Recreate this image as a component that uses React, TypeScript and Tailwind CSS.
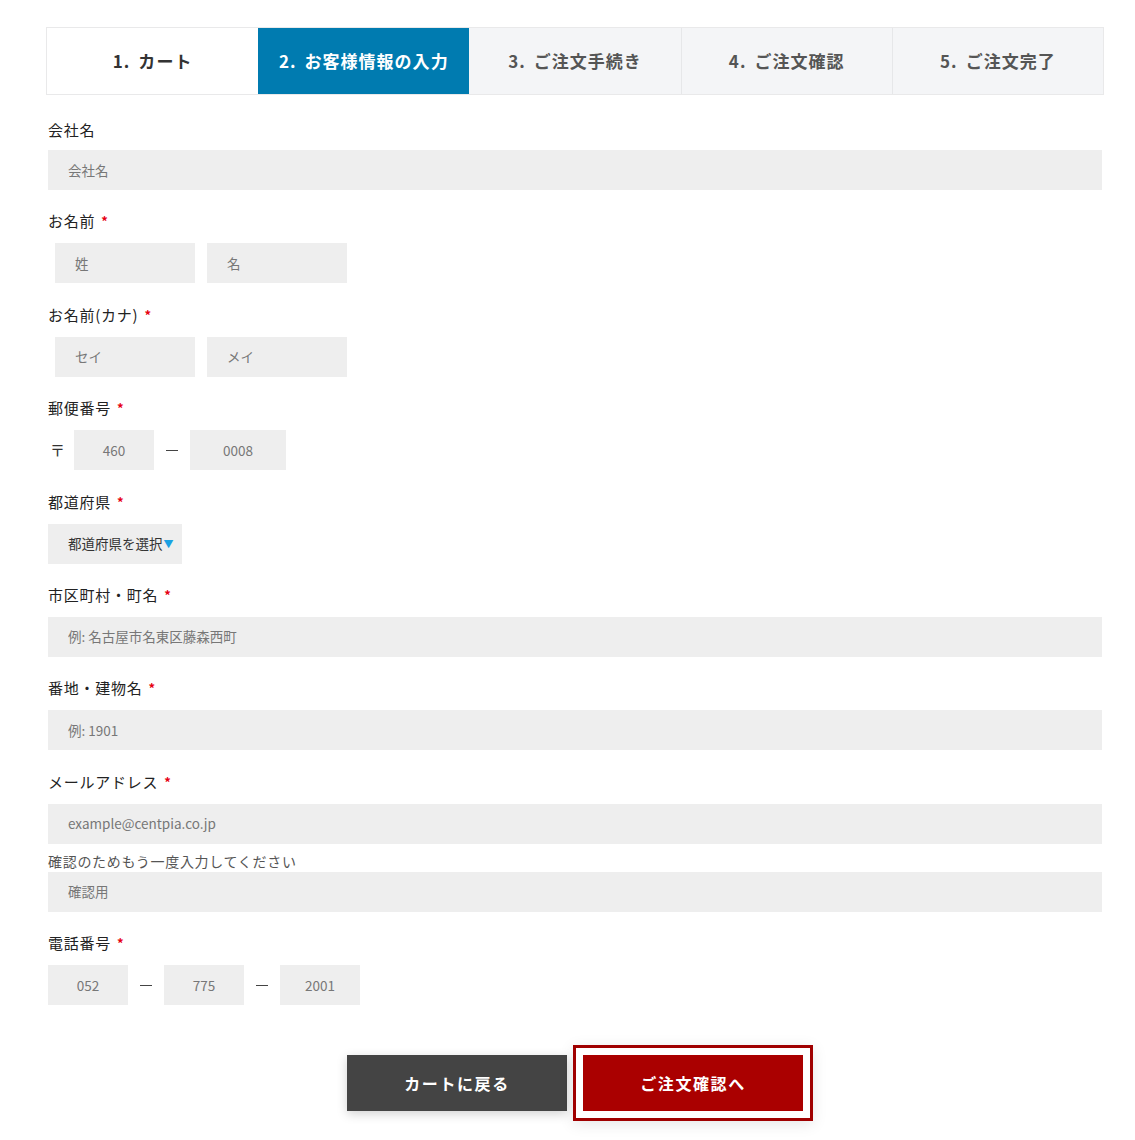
import React from "react";

const steps = [
  { no: "1.", label: "カート" },
  { no: "2.", label: "お客様情報の入力" },
  { no: "3.", label: "ご注文手続き" },
  { no: "4.", label: "ご注文確認" },
  { no: "5.", label: "ご注文完了" },
];

function Label({ children, required, first }: { children: React.ReactNode; required?: boolean; first?: boolean }) {
  return (
    <div
      className={`flex items-center text-[15px] leading-[22px] tracking-[0.05em] text-[#222] ${
        first ? "mb-[9px]" : "mb-[11px]"
      }`}
    >
      <span>{children}</span>
      {required && <span className="ml-[6px] text-[13px] font-bold text-[#e60012]">*</span>}
    </div>
  );
}

function Field({ placeholder, className = "", center }: { placeholder: string; className?: string; center?: boolean }) {
  return (
    <input
      type="text"
      placeholder={placeholder}
      className={`h-[40px] bg-[#eeeeee] pb-[1px] text-[13.5px] text-[#333] placeholder:text-[#777] outline-none ${
        center ? "text-center" : "px-[20px]"
      } ${className}`}
    />
  );
}

function Dash() {
  return (
    <span className="flex w-[36px] shrink-0 items-center justify-center">
      <span className="block h-px w-[12px] bg-[#444]" />
    </span>
  );
}

export default function App() {
  return (
    <div className="min-h-[1140px] bg-white font-['Noto_Sans_CJK_JP','Noto_Sans',sans-serif]">
      <div className="ml-[46px] w-[1058px] pt-[27px]">
        {/* ステップ表示 */}
        <div className="grid grid-cols-5 border border-[#e9e9ea]">
          {steps.map((s, i) => {
            const active = i === 1;
            const done = i === 0;
            return (
              <div
                key={s.no}
                className={`flex h-[66px] items-center justify-center text-[17px] font-bold tracking-[0.06em] ${
                  active
                    ? "bg-[#007bb0] text-white"
                    : done
                    ? "bg-white text-[#333]"
                    : "bg-[#f4f5f7] text-[#555]"
                } ${i > 2 ? "border-l border-[#e6e7e9]" : ""}`}
              >
                <span className="mr-[8px]">{s.no}</span>
                <span>{s.label}</span>
              </div>
            );
          })}
        </div>

        {/* 入力フォーム */}
        <div className="flex flex-col gap-[20.4px] px-[2px] pt-[24px]">
          <div>
            <Label first>会社名</Label>
            <Field placeholder="会社名" className="w-full" />
          </div>

          <div>
            <Label required>お名前</Label>
            <div className="flex gap-[12px] pl-[7px]">
              <Field placeholder="姓" className="w-[140px]" />
              <Field placeholder="名" className="w-[140px]" />
            </div>
          </div>

          <div>
            <Label required>お名前(カナ)</Label>
            <div className="flex gap-[12px] pl-[7px]">
              <Field placeholder="セイ" className="w-[140px]" />
              <Field placeholder="メイ" className="w-[140px]" />
            </div>
          </div>

          <div>
            <Label required>郵便番号</Label>
            <div className="flex items-center">
              <span className="ml-[2px] w-[24px] text-[15px] text-[#333]">〒</span>
              <Field placeholder="460" center className="w-[80px]" />
              <Dash />
              <Field placeholder="0008" center className="w-[96px]" />
            </div>
          </div>

          <div>
            <Label required>都道府県</Label>
            <div className="flex h-[40px] w-[134px] items-center bg-[#eeeeee] pl-[20px] text-[13.5px] text-[#333]">
              <span>都道府県を選択</span>
              <span className="ml-[1px] text-[10px] text-[#1ba1e2]">▼</span>
            </div>
          </div>

          <div>
            <Label required>市区町村・町名</Label>
            <Field placeholder="例: 名古屋市名東区藤森西町" className="w-full" />
          </div>

          <div>
            <Label required>番地・建物名</Label>
            <Field placeholder="例: 1901" className="w-full" />
          </div>

          <div>
            <Label required>メールアドレス</Label>
            <Field placeholder="example@centpia.co.jp" className="w-full" />
            <div className="mt-[7px] mb-[1px] text-[14px] leading-[20px] tracking-[0.05em] text-[#555]">
              確認のためもう一度入力してください
            </div>
            <Field placeholder="確認用" className="w-full" />
          </div>

          <div>
            <Label required>電話番号</Label>
            <div className="flex items-center">
              <Field placeholder="052" center className="w-[80px]" />
              <Dash />
              <Field placeholder="775" center className="w-[80px]" />
              <Dash />
              <Field placeholder="2001" center className="w-[80px]" />
            </div>
          </div>
        </div>

        {/* ボタン */}
        <div className="mt-[50px] flex justify-center gap-[16px] px-[2px]">
          <button className="h-[56px] w-[220px] bg-[#444] text-[16px] font-bold tracking-[0.1em] text-white shadow-[0_3px_10px_rgba(0,0,0,0.18)]">
            カートに戻る
          </button>
          <button className="h-[56px] w-[220px] bg-[#aa0000] text-[16px] font-bold tracking-[0.1em] text-white outline-3 outline-[#a00000] outline-offset-[7px] shadow-[0_0_0_10px_#fff,0_3px_14px_10px_rgba(0,0,0,0.1)]">
            ご注文確認へ
          </button>
        </div>
      </div>
    </div>
  );
}
